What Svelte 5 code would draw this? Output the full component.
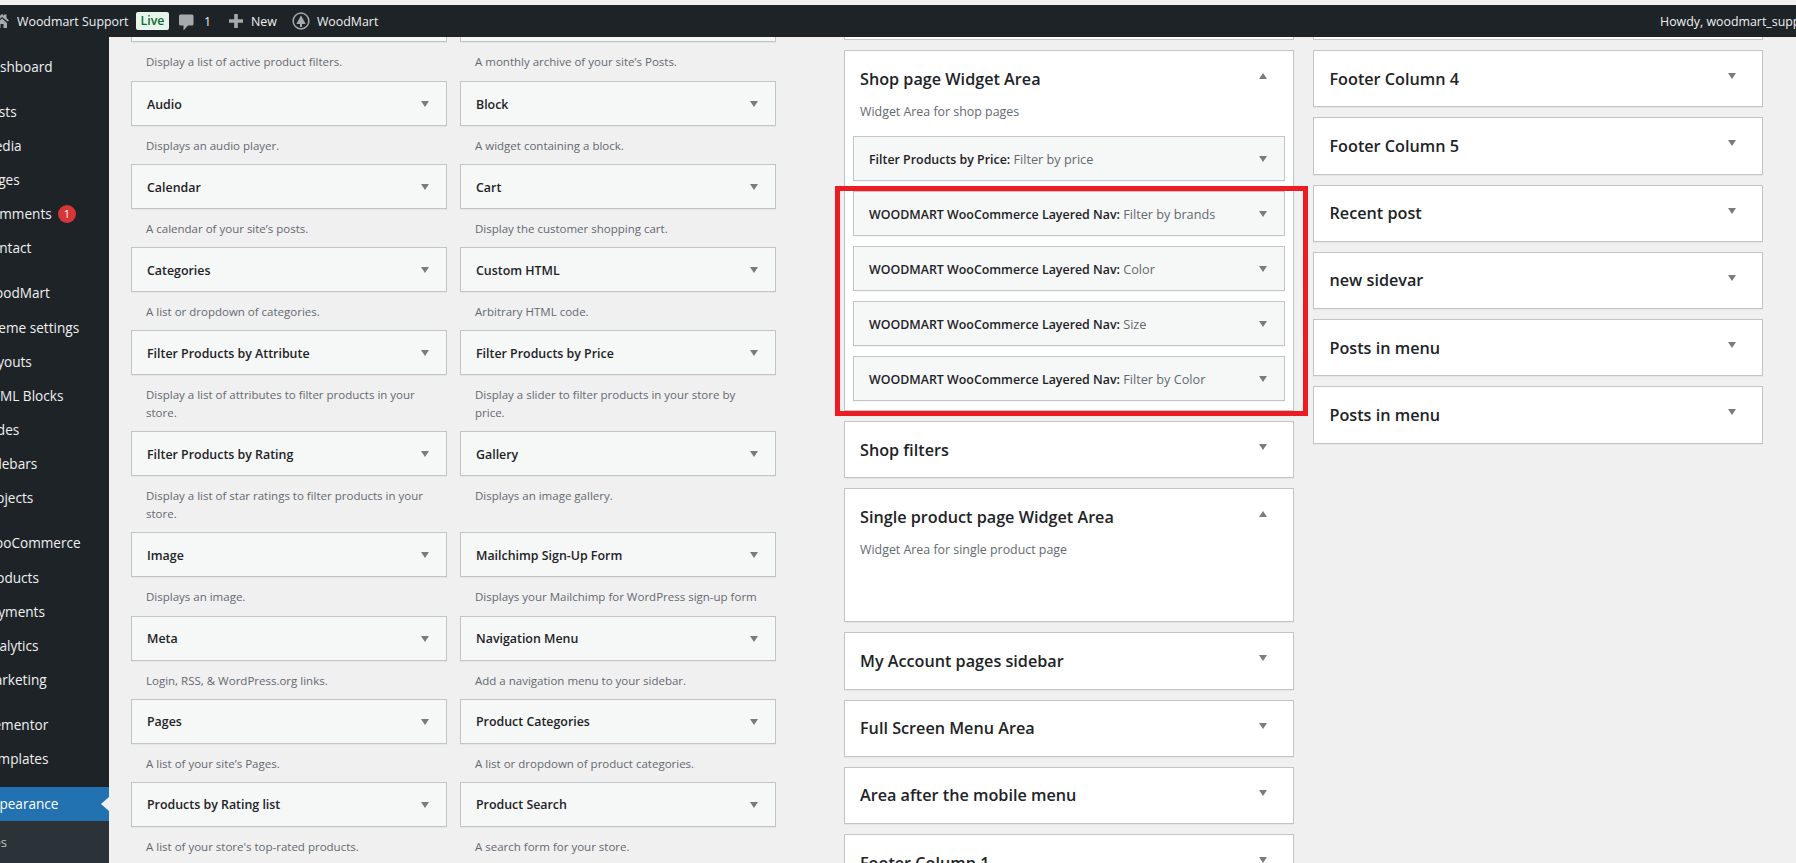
<script>
  const menu = [
    { t: 'Dashboard', sep: true },
    { t: 'Posts' }, { t: 'Media' }, { t: 'Pages' }, { t: 'Comments', badge: 1 }, { t: 'Contact', sep: true },
    { t: 'WoodMart' }, { t: 'Theme settings' }, { t: 'Layouts' }, { t: 'HTML Blocks' }, { t: 'Slides' }, { t: 'Sidebars' }, { t: 'Projects', sep: true },
    { t: 'WooCommerce' }, { t: 'Products' }, { t: 'Payments' }, { t: 'Analytics' }, { t: 'Marketing', sep: true },
    { t: 'Elementor' }, { t: 'Templates', sep: true }
  ];
  const rows = [
    [['Audio', 'Displays an audio player.'], ['Block', 'A widget containing a block.']],
    [['Calendar', 'A calendar of your site’s posts.'], ['Cart', 'Display the customer shopping cart.']],
    [['Categories', 'A list or dropdown of categories.'], ['Custom HTML', 'Arbitrary HTML code.']],
    [['Filter Products by Attribute', 'Display a list of attributes to filter products in your store.'], ['Filter Products by Price', 'Display a slider to filter products in your store by price.']],
    [['Filter Products by Rating', 'Display a list of star ratings to filter products in your store.'], ['Gallery', 'Displays an image gallery.']],
    [['Image', 'Displays an image.'], ['Mailchimp Sign-Up Form', 'Displays your Mailchimp for WordPress sign-up form']],
    [['Meta', 'Login, RSS, & WordPress.org links.'], ['Navigation Menu', 'Add a navigation menu to your sidebar.']],
    [['Pages', 'A list of your site’s Pages.'], ['Product Categories', 'A list or dropdown of product categories.']],
    [['Products by Rating list', 'A list of your store\'s top-rated products.'], ['Product Search', 'A search form for your store.']]
  ];
  const shopWidgets = [
    ['Filter Products by Price:', 'Filter by price'],
    ['WOODMART WooCommerce Layered Nav:', 'Filter by brands'],
    ['WOODMART WooCommerce Layered Nav:', 'Color'],
    ['WOODMART WooCommerce Layered Nav:', 'Size'],
    ['WOODMART WooCommerce Layered Nav:', 'Filter by Color']
  ];
  const midAfter = ['My Account pages sidebar', 'Full Screen Menu Area', 'Area after the mobile menu', 'Footer Column 1'];
  const right = ['Footer Column 4', 'Footer Column 5', 'Recent post', 'new sidevar', 'Posts in menu', 'Posts in menu'];
</script>

<div class="page">
  <header class="bar">
    <svg class="home" width="9" height="14" viewBox="0 0 9 14"><path d="M-6 7 L2 0 L4 1.8 V0.6 H6.5 V4 L9 6.5 L7.6 7.6 L2 3 L-4 8 Z M-3 9 L2 4.6 L7 9 V14 H3.5 V10 H0.5 V14 H-3 Z" fill="#a7aaad"/></svg>
    <span class="site">Woodmart Support</span>
    <span class="live">Live</span>
    <svg class="bubble" width="15" height="17" viewBox="0 0 15 17"><path d="M1.5 0.5 H13 A1.5 1.5 0 0 1 14.5 2 V10 A1.5 1.5 0 0 1 13 11.5 H9 L4.5 16.5 V11.5 H1.5 A1.5 1.5 0 0 1 0 10 V2 A1.5 1.5 0 0 1 1.5 0.5 Z" fill="#a7aaad"/></svg>
    <span class="count">1</span>
    <svg class="plus" width="14" height="14" viewBox="0 0 14 14"><path d="M5.2 0 H8.8 V5.2 H14 V8.8 H8.8 V14 H5.2 V8.8 H0 V5.2 H5.2 Z" fill="#a7aaad"/></svg>
    <span class="new">New</span>
    <svg class="tree" width="18" height="18" viewBox="0 0 18 18"><circle cx="9" cy="9" r="7.9" fill="none" stroke="#a7aaad" stroke-width="1.5"/><path d="M9 3.2 L13.6 12 H10 V15 H8 V12 H4.4 Z" fill="#a7aaad"/></svg>
    <span class="wm">WoodMart</span>
    <span class="howdy">Howdy, woodmart_support</span>
  </header>

  <div class="body">
    <nav class="side">
      <ul>
        {#each menu as m}
          <li class:sep={m.sep}><span>{m.t}</span>{#if m.badge}<b class="badge">{m.badge}</b>{/if}</li>
        {/each}
        <li class="current"><span>Appearance</span><i class="notch"></i></li>
      </ul>
      <div class="sub"><span>Themes</span></div>
    </nav>

    <main class="main">
      <section class="avail">
        <div class="row first">
          <div class="cell"><div class="stub"></div><p>Display a list of active product filters.</p></div>
          <div class="cell"><div class="stub"></div><p>A monthly archive of your site’s Posts.</p></div>
        </div>
        {#each rows as r}
          <div class="row">
            {#each r as c}
              <div class="cell">
                <div class="widget"><strong>{c[0]}</strong><i class="down"></i></div>
                <p>{c[1]}</p>
              </div>
            {/each}
          </div>
        {/each}
      </section>

      <section class="col mid">
        <div class="stubbox"></div>
        <div class="box shop">
          <div class="head"><h2>Shop page Widget Area</h2><i class="up"></i></div>
          <p class="bdesc">Widget Area for shop pages</p>
          <div class="inner">
            {#each shopWidgets as w}
              <div class="widget"><strong>{w[0]} <em>{w[1]}</em></strong><i class="down"></i></div>
            {/each}
          </div>
          <div class="redframe"></div>
        </div>
        <div class="box"><div class="head"><h2>Shop filters</h2><i class="down"></i></div></div>
        <div class="box single">
          <div class="head"><h2>Single product page Widget Area</h2><i class="up"></i></div>
          <p class="bdesc">Widget Area for single product page</p>
        </div>
        {#each midAfter as t}
          <div class="box"><div class="head"><h2>{t}</h2><i class="down"></i></div></div>
        {/each}
      </section>

      <section class="col rightcol">
        <div class="stubbox"></div>
        {#each right as t}
          <div class="box"><div class="head"><h2>{t}</h2><i class="down"></i></div></div>
        {/each}
      </section>
    </main>
  </div>
</div>

<style>
  :global(body) { margin: 0; background: #f0f0f0; }
  .page { width: 1796px; height: 863px; overflow: hidden; display: flex; flex-direction: column; font-family: "Open Sans", "Noto Sans", "Liberation Sans", sans-serif; color: #1d2327; font-size: 13px; }
  .bar { margin-top: 5px; height: 32px; flex: none; background: #1d2327; display: flex; align-items: center; color: #f0f0f1; font-size: 12.4px; position: relative; white-space: nowrap; }
  .site { margin-left: 8px; width: 111px; }
  .live { margin-left: 8px; width: 33px; height: 18px; line-height: 18px; text-align: center; background: #e8f5ec; color: #0b6b2e; border-radius: 2px; font-weight: 600; font-size: 12.4px; }
  .bubble { margin-left: 10px; margin-top: 2px; }
  .count { margin-left: 10px; width: 13px; }
  .plus { margin-left: 12px; }
  .new { margin-left: 8px; }
  .tree { margin-left: 15px; }
  .wm { margin-left: 7px; }
  .howdy { position: absolute; left: 1660px; }

  .body { flex: 1; display: flex; min-height: 0; }
  .side { width: 109px; flex: none; background: #1d2327; color: #f0f0f1; font-size: 13.6px; overflow: hidden; display: flex; flex-direction: column; }
  ul { list-style: none; margin: 0; padding: 12px 0 0; }
  li { height: 34.2px; display: flex; align-items: center; white-space: nowrap; position: relative; }
  li.sep { margin-bottom: 10.8px; }
  li > span { margin-left: -17.5px; }
  .badge { position: absolute; left: 58px; top: 8px; width: 18px; height: 18px; border-radius: 50%; background: #d63638; color: #fff; font-weight: 400; font-size: 11px; line-height: 18px; text-align: center; }
  .current { background: #2271b1; color: #fff; }
  .notch { position: absolute; right: 0; top: 10px; border: 7px solid transparent; border-left-width: 0; border-right: 8px solid #f0f0f1; }
  .sub { flex: 1; background: #2c3338; color: #c3c4c7; padding-top: 12px; white-space: nowrap; font-size: 13px; }
  .sub span { margin-left: -41px; }

  .main { flex: 1; display: flex; min-width: 0; overflow: hidden; background: #f0f0f0; }
  .avail { width: 645px; margin-left: 22px; flex: none; }
  .row { display: grid; grid-template-columns: 316px 316px; column-gap: 13px; }
  .cell p { margin: 0; padding: 11px 15px 9.1px; line-height: 18px; color: #646970; font-size: 11.5px; }
  .first .cell p { padding: 11.5px 15px 10px; }
  .stub { height: 4.5px; box-sizing: border-box; background: #f6f7f7; border: 1px solid #c3c4c7; border-top: none; box-shadow: 0 1px 1px rgba(0,0,0,.04); }

  .widget { height: 45px; box-sizing: border-box; background: #f6f7f7; border: 1px solid #c3c4c7; box-shadow: 0 1px 1px rgba(0,0,0,.04); display: flex; align-items: center; justify-content: space-between; padding: 1px 17px 0 15px; }
  .widget strong { font-weight: 600; font-size: 12.4px; color: #1d2327; white-space: nowrap; }
  .widget em { font-style: normal; font-weight: 400; font-size: 12.7px; color: #646970; }
  .down, .up { display: block; flex: none; width: 0; height: 0; border-left: 4px solid transparent; border-right: 4px solid transparent; }
  .down { border-top: 6px solid #787c82; }
  .up { border-bottom: 6px solid #787c82; }

  .col { width: 450px; flex: none; }
  .mid { margin-left: 68px; }
  .rightcol { margin-left: 19px; }
  .rightcol h2 { margin-left: 0.5px; }
  .stubbox { height: 2.5px; box-sizing: border-box; background: #fff; border: 1px solid #c3c4c7; border-top: none; margin-bottom: 10.5px; }
  .box { background: #fff; border: 1px solid #c3c4c7; box-sizing: border-box; box-shadow: 0 1px 1px rgba(0,0,0,.04); margin-bottom: 10px; min-height: 57.3px; position: relative; }
  .head { height: 55px; display: flex; align-items: center; justify-content: space-between; padding: 0 26px 0 15px; }
  .head .down, .head .up { margin-top: -5px; }
  h2 { margin: 0; font-size: 16.2px; font-weight: 600; color: #1d2327; white-space: nowrap; }
  .bdesc { margin: 0; padding: 0 15px; line-height: 18px; color: #646970; font-size: 12.4px; position: relative; top: -3px; }
  .shop { height: 361px; }
  .single { height: 134px; }
  .inner { padding: 12px 8px 0 8px; display: flex; flex-direction: column; gap: 10px; }
  .redframe { position: absolute; left: -10px; top: 135px; width: 473px; height: 230px; box-sizing: border-box; border: 5px solid #ed1c24; pointer-events: none; }
</style>
